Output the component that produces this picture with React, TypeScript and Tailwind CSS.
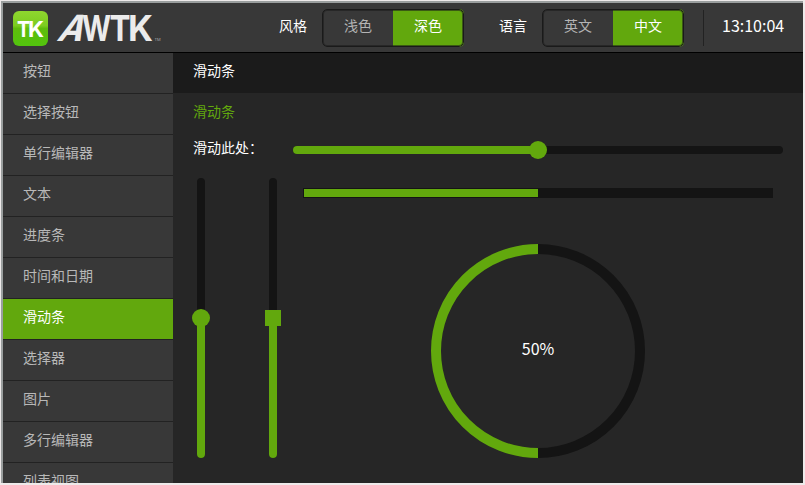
const menuItems = ['按钮', '选择按钮', '单行编辑器', '文本', '进度条', '时间和日期', '滑动条', '选择器', '图片', '多行编辑器', '列表视图'];
const ACTIVE = '滑动条';

function Logo() {
  return (
    <svg width="150" height="36" viewBox="0 0 150 36" className="block shrink-0 overflow-visible" fontFamily="Inter, 'Liberation Sans', sans-serif">
      <defs>
        <linearGradient id="badge" x1="0" y1="0" x2="0" y2="1">
          <stop offset="0" stopColor="#8fd62f" />
          <stop offset="0.42" stopColor="#7ccc20" />
          <stop offset="0.5" stopColor="#5fbc0c" />
          <stop offset="1" stopColor="#52c40e" />
        </linearGradient>
      </defs>
      <rect x="0" y="0" width="35" height="35" rx="6" fill="url(#badge)" />
      <g fill="#ffffff" fontWeight="700" fontSize="22">
        <text x="4" y="25.5" textLength="13" lengthAdjust="spacingAndGlyphs">T</text>
        <text x="15" y="25.5" textLength="16" lengthAdjust="spacingAndGlyphs">K</text>
      </g>
      <g fill="#ebebeb" fontWeight="700" fontSize="36">
        <text transform="translate(43 30) skewX(-24)" textLength="25" lengthAdjust="spacingAndGlyphs">A</text>
        <text x="69" y="30" textLength="29" lengthAdjust="spacingAndGlyphs">W</text>
        <text x="96.5" y="30" textLength="21" lengthAdjust="spacingAndGlyphs">T</text>
        <text x="115" y="30" textLength="25" lengthAdjust="spacingAndGlyphs">K</text>
      </g>
      <text x="141.5" y="30" fontSize="4" fill="#aaaaaa">TM</text>
    </svg>
  );
}

function Segmented({ options, selected }: { options: string[]; selected: number }) {
  return (
    <div className="relative flex h-[38px] w-[142px] shrink-0 overflow-hidden rounded-[5px] after:absolute after:inset-0 after:rounded-[5px] after:border after:border-[#1a1a1a] after:shadow-[inset_0_0_0_1px_rgba(26,26,26,0.55)] after:content-['']">
      {options.map((o, i) => (
        <span
          key={o}
          className={`flex w-[71px] items-center justify-center pb-1.5 ${i === selected ? 'bg-[#62a80d] pr-px text-white' : 'pl-px text-[#b4b4b4]'}`}
        >
          {o}
        </span>
      ))}
    </div>
  );
}

function Header() {
  return (
    <header className="flex h-[50px] shrink-0 items-start border-b border-black bg-[#383838] pl-[10px] text-white">
      <div className="w-[266px] pt-2">
        <Logo />
      </div>
      <span className="w-[43px] pt-3">风格</span>
      <div className="w-[177px] pt-[6px]">
        <Segmented options={['浅色', '深色']} selected={1} />
      </div>
      <span className="w-[43px] pt-3">语言</span>
      <div className="w-[161px] pt-[6px]">
        <Segmented options={['英文', '中文']} selected={1} />
      </div>
      <div className="mt-[7px] h-9 w-px bg-[#222222]" />
      <time className="ml-[18px] pt-3 text-base leading-5">13:10:04</time>
    </header>
  );
}

function Sidebar() {
  return (
    <nav className="w-[170px] shrink-0 overflow-hidden bg-[#383838]">
      {menuItems.map((m) => (
        <div
          key={m}
          className={`flex h-[41px] items-center border-b border-[#222222] pb-1.5 pl-5 ${m === ACTIVE ? 'bg-[#62a80d] text-white' : 'text-[#b8b8b8]'}`}
        >
          {m}
        </div>
      ))}
    </nav>
  );
}

function VerticalSlider({ square = false }: { square?: boolean }) {
  return (
    <div className="relative h-[280px] w-2 rounded-full bg-[#141414]">
      <div className="absolute bottom-0 h-1/2 w-2 rounded-b-full bg-[#62a80d]" />
      <div
        className={`absolute bg-[#62a80d] ${square ? 'top-[132px] -left-1 size-4' : 'top-[131px] -left-[5px] size-[18px] rounded-full'}`}
      />
    </div>
  );
}

function Gauge() {
  return (
    <div className="relative flex size-[214px] items-center justify-center">
      <svg width="214" height="214" viewBox="0 0 214 214" className="absolute inset-0" fill="none" strokeWidth="10">
        <path d="M107 5a102 102 0 0 1 0 204" stroke="#141414" />
        <path d="M107 209a102 102 0 0 1 0-204" stroke="#62a80d" />
      </svg>
      <span className="pb-1.5 text-base leading-5 text-white">50%</span>
    </div>
  );
}

export default function App() {
  return (
    <div className="h-[485px] w-[805px] bg-[#eeeaea] pt-px pl-px font-['Noto_Sans_CJK_SC',sans-serif] text-sm leading-5">
      <div className="flex h-[482px] w-[802px] flex-col border-t-2 border-l-2 border-[#9a9e9e] bg-[#262626]">
        <Header />
        <div className="flex min-h-0 flex-1">
          <Sidebar />
          <main className="flex flex-1 flex-col">
            <h1 className="h-10 bg-[#1b1b1b] pt-[7px] pl-5 text-white">滑动条</h1>
            <h2 className="h-9 pt-2 pl-5 text-[#62a80d]">滑动条</h2>
            <div className="flex h-[49px] pl-5 text-white">
              <span className="w-[100px] pt-2">滑动此处：</span>
              <div className="relative mt-[17px] h-2 w-[490px] rounded-full bg-[#141414]">
                <div className="h-2 w-1/2 rounded-l-full bg-[#62a80d]" />
                <div className="absolute -top-[5px] left-[236px] size-[18px] rounded-full bg-[#62a80d]" />
              </div>
            </div>
            <div className="flex flex-1">
              <div className="flex w-[130px] gap-16 pl-6">
                <VerticalSlider />
                <VerticalSlider square />
              </div>
              <div className="flex w-[470px] flex-col items-center pt-[10px]">
                <div className="h-[10px] w-full bg-[#141414] p-px pr-0">
                  <div className="h-2 w-[234px] bg-[#62a80d]" />
                </div>
                <div className="mt-[46px]">
                  <Gauge />
                </div>
              </div>
            </div>
          </main>
        </div>
      </div>
    </div>
  );
}
